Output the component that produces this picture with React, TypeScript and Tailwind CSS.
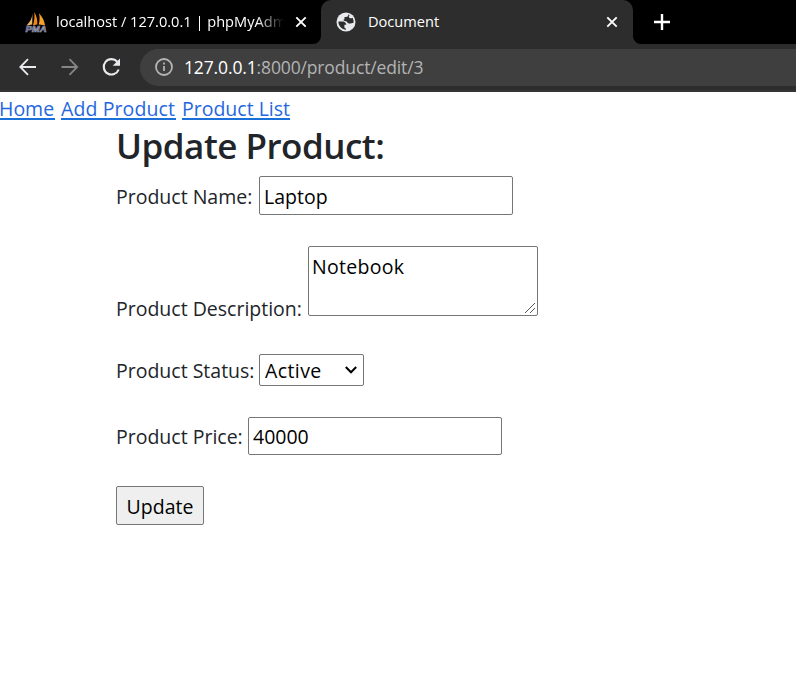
import React from "react";

const ink = "whitespace-nowrap text-[19.5px] leading-[30px]";

function CloseIcon() {
  return (
    <svg width="12" height="12" viewBox="0 0 12 12" className="shrink-0" stroke="#fff" strokeWidth="1.9" fill="none">
      <path d="M1.3 1.3l9.400 9.400M10.700 1.300L1.300 10.700" />
    </svg>
  );
}

function SailIcon() {
  return (
    <svg width="22" height="22" viewBox="0 0 22 22" className="shrink-0">
      <path d="M7.500 2.500C7.200 7 5 11 1.500 14.500l5.700-1z" fill="#e9b56a" />
      <path d="M9.300 1c2.300 3.800 3.400 8 3 12.500L8 14.200C9.400 10 9.700 5.500 9.300 1z" fill="#f38a18" />
      <path d="M14 2.200c3.200 3.400 5.500 7.500 6 12l-6.300-.7c1.100-4 1.200-7.500.3-11.300z" fill="#f6a02c" />
      <text x="0.500" y="21" fontSize="8.500" fontWeight="700" fontStyle="italic" fontFamily="Liberation Sans, sans-serif" textLength="21" lengthAdjust="spacingAndGlyphs" fill="#34355c" stroke="#b9b9d0" strokeWidth="0.500">PMA</text>
    </svg>
  );
}

function GlobeIcon() {
  return (
    <svg width="20" height="20" viewBox="0 0 20 20" className="shrink-0">
      <circle cx="10" cy="10" r="9.500" fill="#e8eaed" />
      <path d="M12.200 2.400v.5c0 1-.8 1.900-1.900 1.900H8.400v1.900c0 .6-.4 1-1 1H5.500v2h5.700c.6 0 1 .4 1 1v2.800h.9c.9 0 1.600.6 1.800 1.300" fill="none" stroke="#e8eaed" strokeWidth="0.100" />
      <path d="M12.300 2.500c0 1.800-.8 2.500-2.300 2.500H8.500v1.800c0 .7-.5 1-1.100 1 .1 1.100 1.100 1.400 2.300 1.400 1.700 0 1.700 2.300 3.600 2.300 1.600 0 2.700-.8 4.300-.8a7.700 7.700 0 0 0-1.100-5c-.8.700-2 .8-2.900.2-1.200-.8-.6-2.200.1-3z" fill="#2d2d2d" />
      <path d="M2.400 9.500h4.400c1.800 0 3.500 1.300 3.500 3.200h-1.900v2.300c0 1 .8 1.500 1.600 1.500v1.200C5.900 17.700 2.300 14 2.400 9.500z" fill="#2d2d2d" />
    </svg>
  );
}

function TabStrip() {
  return (
    <div className="flex h-11 bg-black text-[14.600px] text-white">
      <div className="flex w-[321px] items-center pl-[25px]">
        <SailIcon />
        <div className="ml-[9px] w-[228px] overflow-hidden whitespace-nowrap [mask-image:linear-gradient(to_right,black_88%,transparent_100%)]">
          localhost / 127.0.0.1 | phpMyAdmin
        </div>
        <div className="ml-[11px] flex"><CloseIcon /></div>
      </div>
      <div className="relative flex w-[312px] items-center rounded-t-[10px] bg-[#2d2d2d] pl-[15px]">
        <svg className="absolute bottom-0 -left-2" width="8" height="8"><path d="M8 0v8H0a8 8 0 0 0 8-8z" fill="#2d2d2d" /></svg>
        <svg className="absolute -right-2 bottom-0" width="8" height="8"><path d="M0 0v8h8a8 8 0 0 1-8-8z" fill="#2d2d2d" /></svg>
        <GlobeIcon />
        <span className="ml-3 w-[238px]">Document</span>
        <CloseIcon />
      </div>
      <div className="flex items-center pl-[21px]">
        <svg width="16" height="16" viewBox="0 0 16 16" stroke="#fff" strokeWidth="2.400"><path d="M8 0v16M0 8h16" /></svg>
      </div>
    </div>
  );
}

function Toolbar() {
  return (
    <div className="flex h-12 items-center border-b-2 border-[#343434] bg-[#2d2d2d]">
      <svg className="ml-[19px]" width="18" height="18" viewBox="0 0 18 18" fill="none" stroke="#e8eaed" strokeWidth="1.800"><path d="M17 9H1.800M9 1.200L1.300 9 9 16.800" /></svg>
      <svg className="ml-6" width="18" height="18" viewBox="0 0 18 18" fill="none" stroke="#858585" strokeWidth="1.800"><path d="M.5 9h15.200M8.500 1.200L16.200 9 8.500 16.800" /></svg>
      <svg className="ml-[23px]" width="20" height="20" viewBox="0 0 20 20"><path d="M16.700 12.500A7.700 7.700 0 1 1 15.300 4.800" fill="none" stroke="#e8eaed" strokeWidth="2.100" /><path d="M18 1.500v7.300h-7.300z" fill="#e8eaed" /></svg>
      <div className="ml-[18px] flex h-[37px] flex-1 items-center rounded-l-full bg-[#3f3f3f] pl-[14px]">
        <svg width="20" height="20" viewBox="0 0 20 20" fill="none" stroke="#b4b4b4" strokeWidth="1.800"><circle cx="10" cy="10" r="8" /><path d="M10 9v5M10 5.500v2" /></svg>
        <span className="ml-2.5 text-[17.500px] tracking-[-0.140px] whitespace-nowrap text-[#b3b3b3]">
          <span className="text-white">127.0.0.1</span>:8000/product/edit/3
        </span>
      </div>
    </div>
  );
}

function Label({ children }: { children: React.ReactNode }) {
  return <label className={`${ink} block pt-0.5`}>{children}</label>;
}

export default function App() {
  const link = "border-b-2 border-[#1a6fd8]";
  return (
    <div className="h-[691px] overflow-hidden bg-white font-['Open_Sans','Noto_Sans',sans-serif] text-[#212529]">
      <TabStrip />
      <Toolbar />
      <nav className="flex h-[28px] gap-[6px] whitespace-nowrap text-[19.500px] leading-[34px] text-[#2567df]">
        <a className={`${link} -ml-px w-14`}>Home</a>
        <a className={`${link} w-[115px] tracking-[0.100px]`}>Add Product</a>
        <a className={`${link} w-[108px]`}>Product List</a>
      </nav>
      <main className="pl-[116px]">
        <h2 className="h-14 text-[35px] leading-[52px] font-semibold tracking-[-0.500px] whitespace-nowrap">Update Product:</h2>
        <div className="flex h-[39px] items-center">
          <div className="w-[143px]"><Label>Product Name:</Label></div>
          <input defaultValue="Laptop" className={`${ink} h-[39px] w-[254px] rounded-[2px] border border-[#767676] px-1 pt-px text-black`} />
        </div>
        <div className="mt-[31px] flex h-[78px] items-end">
          <div className="w-[192px]"><Label>Product Description:</Label></div>
          <div className="relative mb-2 h-[70px]">
            <textarea defaultValue="Notebook" className={`${ink} h-[70px] w-[230px] resize-none rounded-[2px] border border-[#767676] px-[3px] pt-[5px] tracking-[0.300px] text-black`} />
            <svg className="absolute right-[2px] bottom-[2px]" width="12" height="12" viewBox="0 0 12 12" stroke="#555" strokeWidth="1"><path d="M1 11L11 1M6 11l5-5" /></svg>
          </div>
        </div>
        <div className="mt-[30px] flex h-8 items-center">
          <div className="w-[143px]"><Label>Product Status:</Label></div>
          <div className="flex h-8 w-[105px] items-center justify-between rounded-[2px] border border-[#767676] pr-1.5 pl-[5px] text-black">
            <span className={`${ink} pt-0.5 tracking-[0.400px]`}>Active</span>
            <svg width="12" height="8" viewBox="0 0 12 8" fill="none" stroke="#000" strokeWidth="2"><path d="M.8 1L6 6.300 11.200 1" /></svg>
          </div>
        </div>
        <div className="mt-[31px] flex h-[38px] items-center">
          <div className="w-[132px]"><Label>Product Price:</Label></div>
          <input defaultValue="40000" className={`${ink} h-[38px] w-[254px] rounded-[2px] border border-[#767676] px-1 pt-px text-black`} />
        </div>
        <button className={`${ink} mt-[31px] flex h-[39px] w-[88px] items-center justify-center rounded-[2px] border border-[#767676] bg-[#efefef] pt-0.5 text-black`}>Update</button>
      </main>
    </div>
  );
}
